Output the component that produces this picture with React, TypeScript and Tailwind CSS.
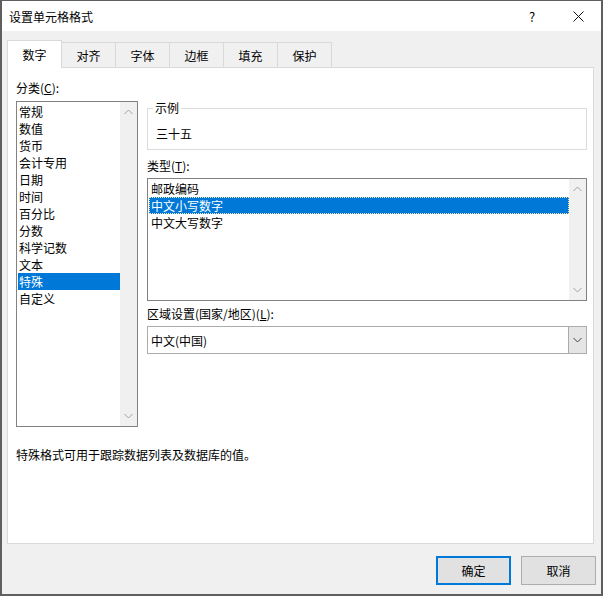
import React from "react";

const font = { fontFamily: '"Noto Sans CJK SC", "Noto Sans", sans-serif' };

const categories = ["常规", "数值", "货币", "会计专用", "日期", "时间", "百分比", "分数", "科学记数", "文本", "特殊", "自定义"];
const types = ["邮政编码", "中文小写数字", "中文大写数字"];
const tabs = ["对齐", "字体", "边框", "填充", "保护"];

const Chevron = ({ up }: { up?: boolean }) => (
	<svg width="9" height="6" viewBox="0 0 9 6">
		<polyline
			points={up ? "0.5,5 4.5,1 8.5,5" : "0.5,1 4.5,5 8.5,1"}
			fill="none"
			stroke="#a3a3a3"
			strokeWidth="1"
		/>
	</svg>
);

const ScrollBar = () => (
	<div className="flex w-[17px] flex-col items-center justify-between bg-[#f0f0f0] py-[7px]">
		<Chevron up />
		<Chevron />
	</div>
);

export default function App() {
	return (
		<div
			style={font}
			className="flex h-[596px] w-[603px] flex-col border-x-2 border-t border-b-2 border-[#5f5f5f] text-[12px] leading-[17px] text-black"
		>
			{/* title bar */}
			<div className="flex h-[30px] items-center bg-white pl-[7px]">
				<span className="flex-1 text-[12px]">设置单元格格式</span>
				<span className="w-[46px] text-center text-[13px]">?</span>
				<div className="flex w-[46px] items-center justify-center">
					<svg width="11" height="11" viewBox="0 0 11 11">
						<path d="M0.5 0.5 L10.5 10.5 M10.5 0.5 L0.5 10.5" stroke="#111" strokeWidth="1" />
					</svg>
				</div>
			</div>

			<div className="flex flex-1 flex-col bg-[#f0f0f0] px-[5px] pt-[9px]">
				{/* tabs */}
				<div className="flex h-[27px] items-end">
					<div className="relative z-10 -mb-px flex h-[28px] w-[55px] items-center justify-center border border-b-0 border-[#d9d9d9] bg-white pb-[1px]">
						数字
					</div>
					{tabs.map((t) => (
						<div
							key={t}
							className="flex h-[25px] w-[54px] items-center justify-center border border-b-0 border-l-0 border-[#d9d9d9] bg-[#f0f0f0]"
						>
							{t}
						</div>
					))}
				</div>

				{/* panel */}
				<div className="flex h-[477px] w-[587px] flex-col border border-[#d9d9d9] bg-white pl-[8px] pr-[6px]">
					<div className="flex">
						{/* category */}
						<div className="flex w-[122px] flex-col pt-[13px]">
							<div className="leading-[14px]">
								分类(<span className="underline">C</span>):
							</div>
							<div className="mt-[6px] flex h-[326px] border border-[#828282]">
								<div className="flex-1 pl-px pt-px">
									{categories.map((c) => (
										<div
											key={c}
											className={`h-[17px] pl-[1px] ${c === "特殊" ? "bg-[#0078d7] text-white" : ""}`}
										>
											{c}
										</div>
									))}
								</div>
								<ScrollBar />
							</div>
						</div>

						{/* right column */}
						<div className="ml-[9px] flex flex-1 flex-col">
							<fieldset className="mt-[33px] h-[49px] border border-[#dcdcdc] px-[8px]">
								<legend className="-ml-[3px] px-[2px] leading-[14px]">示例</legend>
								<div className="pt-[12px] leading-[14px]">三十五</div>
							</fieldset>

							<div className="mt-[9px] leading-[14px]">
								类型(<span className="underline">T</span>):
							</div>
							<div className="mt-[5px] flex h-[123px] border border-[#828282]">
								<div className="flex-1 pl-px pt-px">
									{types.map((t) => (
										<div
											key={t}
											className={`h-[17px] pl-[2px] ${t === "中文小写数字" ? "bg-[#0078d7] text-white outline-1 -outline-offset-1 outline-dotted outline-[#f5e6a8]" : ""}`}
										>
											{t}
										</div>
									))}
								</div>
								<ScrollBar />
							</div>

							<div className="mt-[6px] leading-[14px]">
								区域设置(国家/地区)(<span className="underline">L</span>):
							</div>
							<div className="mt-[5px] flex h-[28px] border border-[#acacac] bg-white">
								<div className="flex flex-1 items-center pl-[3px]">中文(中国)</div>
								<div className="flex w-[18px] items-center justify-center border-l border-[#acacac] bg-[#e5e5e5]">
									<svg width="9" height="6" viewBox="0 0 9 6">
										<polyline points="0.5,1 4.5,5 8.5,1" fill="none" stroke="#444" strokeWidth="1" />
									</svg>
								</div>
							</div>
						</div>
					</div>

					<div className="mt-[21px] leading-[14px]">特殊格式可用于跟踪数据列表及数据库的值。</div>
				</div>

				{/* buttons */}
				<div className="mt-[12px] flex justify-end gap-[10px]">
					<button className="flex h-[29px] w-[75px] items-center justify-center border-2 border-[#0078d7] bg-[#e1e1e1]">
						确定
					</button>
					<button className="flex h-[29px] w-[75px] items-center justify-center border border-[#adadad] bg-[#e1e1e1]">
						取消
					</button>
				</div>
			</div>
		</div>
	);
}
